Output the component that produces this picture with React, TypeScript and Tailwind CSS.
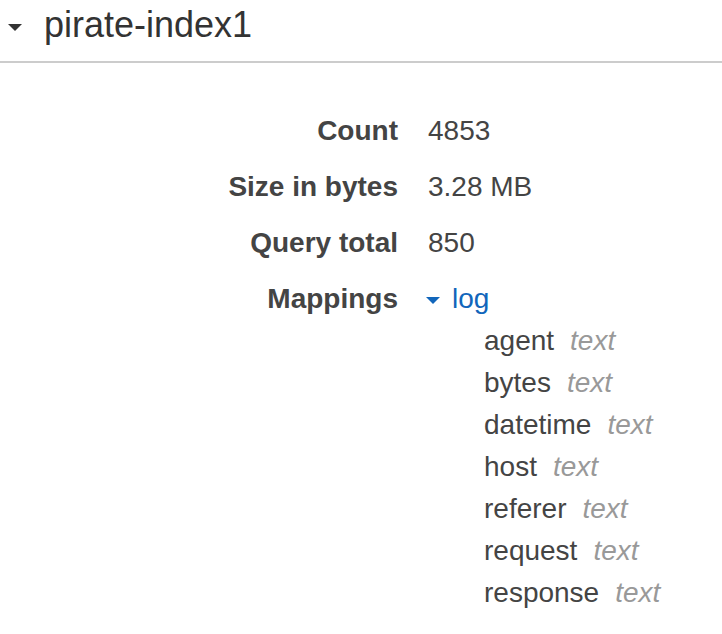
import React from "react";

const fields = ["agent", "bytes", "datetime", "host", "referer", "request", "response"];

function Caret({ className }: { className: string }) {
  return (
    <svg viewBox="0 0 14 7" className={className} fill="currentColor">
      <path d="M0 0 H14 L7 7 Z" />
    </svg>
  );
}

function Row({ label, children }: { label: string; children: React.ReactNode }) {
  return (
    <div className="flex mb-[14px]">
      <div className="w-[398px] shrink-0 text-right font-bold">{label}</div>
      <div className="pl-[30px]">{children}</div>
    </div>
  );
}

export default function App() {
  return (
    <div
      className="w-[722px] h-[634px] bg-white text-[#444] overflow-hidden"
      style={{ fontFamily: '"Liberation Sans", Arial, sans-serif' }}
    >
      <div className="flex items-center pt-[3px] pb-[15px] border-b-2 border-[#cccccc]">
        <Caret className="w-[14px] h-[7px] ml-[8px] mt-[6px] text-[#333]" />
        <span className="ml-[22px] text-[36px] leading-[43px] text-[#333]">pirate-index1</span>
      </div>
      <div className="pt-[47px] text-[28px] leading-[42px]">
        <Row label="Count">4853</Row>
        <Row label="Size in bytes">3.28 MB</Row>
        <Row label="Query total">850</Row>
        <Row label="Mappings">
          <div className="flex items-center text-[#1166bb]">
            <Caret className="w-[14px] h-[7px] mt-[2px] ml-[-2px]" />
            <span className="ml-[12px]">log</span>
          </div>
          <div className="pl-[56px]">
            {fields.map((f) => (
              <div key={f} className="flex">
                <span>{f}</span>
                <span className="ml-[16px] italic text-[#999]">text</span>
              </div>
            ))}
          </div>
        </Row>
      </div>
    </div>
  );
}
